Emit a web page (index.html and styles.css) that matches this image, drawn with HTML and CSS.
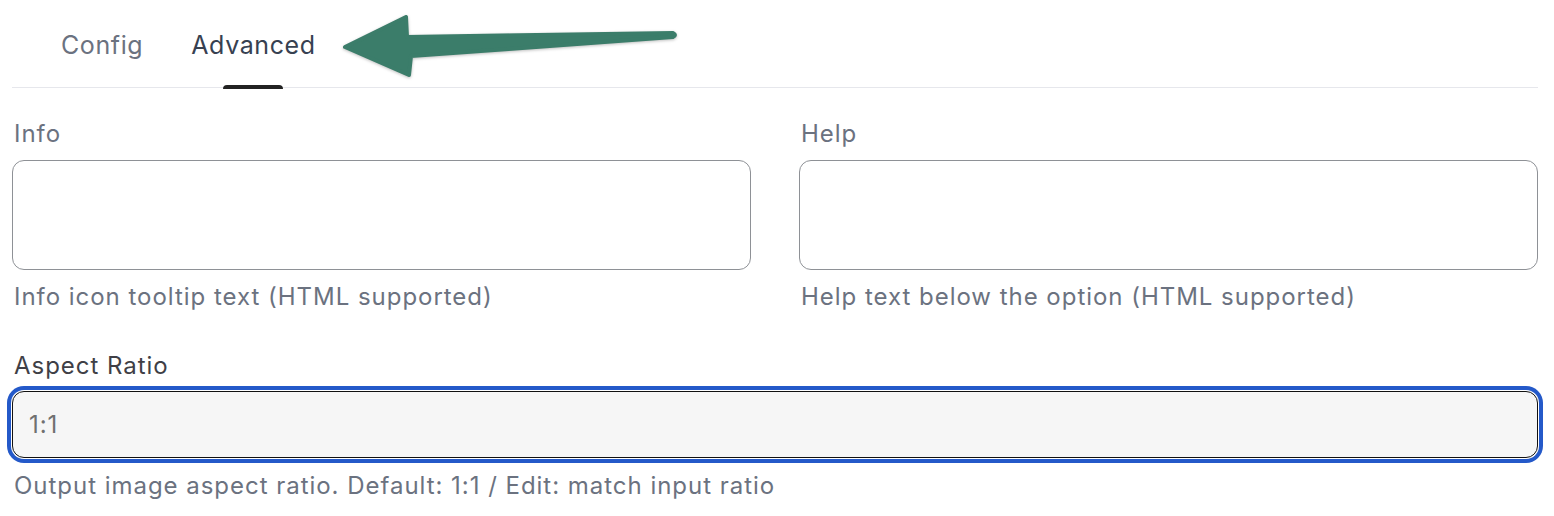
FILE: index.html
```html
<!DOCTYPE html>
<html lang="en">
<head>
<meta charset="utf-8">
<title>Advanced</title>
<link rel="stylesheet" href="styles.css">
</head>
<body>
<div class="page">
  <div class="tabs">
    <div class="tab">Config</div>
    <div class="tab active">Advanced</div>
  </div>
  <div class="grid">
    <div class="field">
      <div class="label">Info</div>
      <div class="textarea"></div>
      <div class="hint">Info icon tooltip text (HTML supported)</div>
    </div>
    <div class="field">
      <div class="label">Help</div>
      <div class="textarea"></div>
      <div class="hint">Help text below the option (HTML supported)</div>
    </div>
  </div>
  <div class="field wide">
    <div class="label dark">Aspect Ratio</div>
    <div class="input">1:1</div>
    <div class="hint">Output image aspect ratio. Default: 1:1 / Edit: match input ratio</div>
  </div>
</div>
<svg class="arrow" width="700" height="100" viewBox="0 0 700 100" xmlns="http://www.w3.org/2000/svg">
  <path d="M345,47 L406,17 L407,37 L673,33 Q677,35 673,37 L411,56 L409,75 Z" fill="#3b7d6a" stroke="#3b7d6a" stroke-width="4" stroke-linejoin="round"/>
</svg>
</body>
</html>
```
FILE: styles.css
```css
html, body {
  margin: 0;
  padding: 0;
  background: #ffffff;
}
body {
  font-family: Inter, "Noto Sans", "Liberation Sans", sans-serif;
  font-size: 24px;
  letter-spacing: 0.97px;
  position: relative;
  width: 1554px;
  height: 516px;
  overflow: hidden;
}
.page {
  padding: 0 16px 0 12px;
}
.tabs {
  display: flex;
  height: 84px;
  padding-top: 3px;
  border-bottom: 1px solid #e6e7ec;
  padding-left: 25px;
}
.tab {
  position: relative;
  padding: 0 24px;
  display: flex;
  align-items: center;
  color: #6b7280;
  font-size: 25px;
  letter-spacing: 0.6px;
  line-height: 32px;
}
.tab.active {
  color: #374151;
}
.tab.active::after {
  content: "";
  position: absolute;
  left: 50%;
  bottom: -2px;
  width: 60px;
  margin-left: -30px;
  height: 4px;
  border-radius: 4px 4px 0 0;
  background: #222222;
}
.grid {
  display: grid;
  grid-template-columns: 1fr 1fr;
  column-gap: 48px;
  margin-top: 30px;
}
.field {
  display: flex;
  flex-direction: column;
}
.label {
  color: #6b7280;
  line-height: 32px;
  padding-left: 2px;
}
.label.dark {
  color: #3f3f46;
}
.textarea {
  margin-top: 10px;
  height: 108px;
  border: 1px solid #8e9196;
  border-radius: 12px;
  background: #ffffff;
}
.hint {
  margin-top: 11px;
  color: #6b7280;
  line-height: 32px;
  padding-left: 2px;
}
.wide {
  margin-top: 37px;
}
.wide .hint {
  margin-top: 12px;
}
.input {
  margin-top: 9px;
  height: 65px;
  box-sizing: content-box;
  border: 1px solid #111111;
  border-radius: 12px;
  background: #f6f6f6;
  box-shadow: 0 0 0 1px #ffffff, 0 0 0 5px #2459c9;
  display: flex;
  align-items: center;
  padding-left: 16px;
  color: #707070;
  line-height: 32px;
}
.arrow {
  position: absolute;
  left: 0;
  top: 0;
  filter: drop-shadow(0 1px 1.5px rgba(0, 0, 0, 0.25));
}
```
